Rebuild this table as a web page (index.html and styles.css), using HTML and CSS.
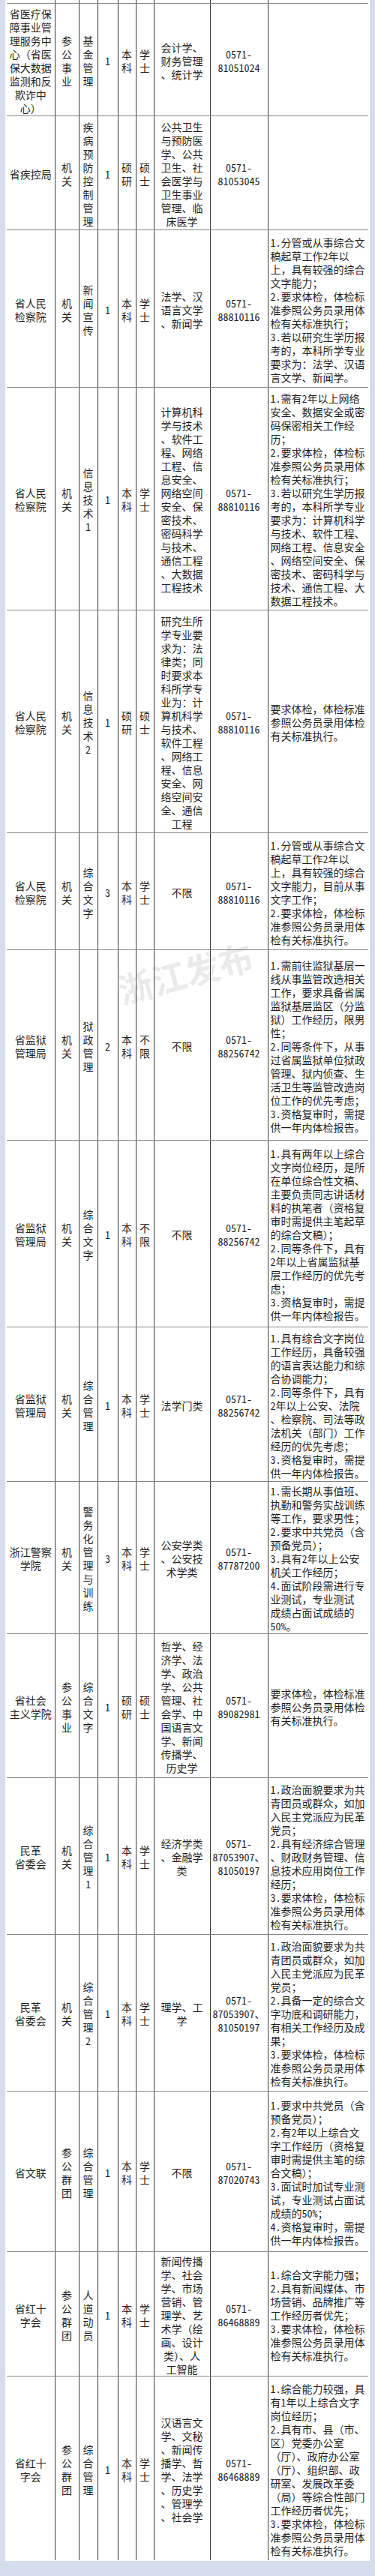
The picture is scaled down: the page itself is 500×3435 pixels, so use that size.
FILE: index.html
```html
<!DOCTYPE html>
<html lang="zh-CN">
<head>
<meta charset="utf-8">
<title>职位表</title>
<link rel="stylesheet" href="styles.css">
</head>
<body>
<div class="page">
<div class="panel">
<table class="jobs">
<colgroup>
<col class="w1"><col class="w2"><col class="w3"><col class="w4"><col class="w5"><col class="w6"><col class="w7"><col class="w8"><col class="w9">
</colgroup>
<tbody>
<tr class="h0"><td></td><td></td><td></td><td></td><td></td><td></td><td></td><td></td><td></td></tr>
<tr class="h150">
<td>省医疗保<br>障事业管<br>理服务中<br>心（省医<br>保大数据<br>监测和反<br>欺诈中<br>心）</td>
<td>参<br>公<br>事<br>业</td>
<td>基<br>金<br>管<br>理</td>
<td>1</td>
<td>本<br>科</td>
<td>学<br>士</td>
<td>会计学、<br>财务管理<br>、统计学</td>
<td>0571-<br>81051024</td>
<td class="note"></td>
</tr>
<tr class="h152">
<td>省疾控局</td>
<td>机<br>关</td>
<td>疾<br>病<br>预<br>防<br>控<br>制<br>管<br>理</td>
<td>1</td>
<td>硕<br>研</td>
<td>硕<br>士</td>
<td>公共卫生<br>与预防医<br>学、公共<br>卫生、社<br>会医学与<br>卫生事业<br>管理、临<br>床医学</td>
<td>0571-<br>81053045</td>
<td class="note"></td>
</tr>
<tr class="h210">
<td>省人民<br>检察院</td>
<td>机<br>关</td>
<td>新<br>闻<br>宣<br>传</td>
<td>1</td>
<td>本<br>科</td>
<td>学<br>士</td>
<td>法学、汉<br>语言文学<br>、新闻学</td>
<td>0571-<br>88810116</td>
<td class="note">1.分管或从事综合文<br>稿起草工作2年以<br>上，具有较强的综合<br>文字能力；<br>2.要求体检，体检标<br>准参照公务员录用体<br>检有关标准执行；<br>3.若以研究生学历报<br>考的，本科所学专业<br>要求为：法学、汉语<br>言文学、新闻学。</td>
</tr>
<tr class="h297">
<td>省人民<br>检察院</td>
<td>机<br>关</td>
<td>信<br>息<br>技<br>术<br>1</td>
<td>1</td>
<td>本<br>科</td>
<td>学<br>士</td>
<td>计算机科<br>学与技术<br>、软件工<br>程、网络<br>工程、信<br>息安全、<br>网络空间<br>安全、保<br>密技术、<br>密码科学<br>与技术、<br>通信工程<br>、大数据<br>工程技术</td>
<td>0571-<br>88810116</td>
<td class="note">1.需有2年以上网络<br>安全、数据安全或密<br>码保密相关工作经<br>历；<br>2.要求体检，体检标<br>准参照公务员录用体<br>检有关标准执行；<br>3.若以研究生学历报<br>考的，本科所学专业<br>要求为：计算机科学<br>与技术、软件工程、<br>网络工程、信息安全<br>、网络空间安全、保<br>密技术、密码科学与<br>技术、通信工程、大<br>数据工程技术。</td>
</tr>
<tr class="h297">
<td>省人民<br>检察院</td>
<td>机<br>关</td>
<td>信<br>息<br>技<br>术<br>2</td>
<td>1</td>
<td>硕<br>研</td>
<td>硕<br>士</td>
<td>研究生所<br>学专业要<br>求为：法<br>律类；同<br>时要求本<br>科所学专<br>业为：计<br>算机科学<br>与技术、<br>软件工程<br>、网络工<br>程、信息<br>安全、网<br>络空间安<br>全、通信<br>工程</td>
<td>0571-<br>88810116</td>
<td class="note">要求体检，体检标准<br>参照公务员录用体检<br>有关标准执行。</td>
</tr>
<tr class="h156">
<td>省人民<br>检察院</td>
<td>机<br>关</td>
<td>综<br>合<br>文<br>字</td>
<td>3</td>
<td>本<br>科</td>
<td>学<br>士</td>
<td>不限</td>
<td>0571-<br>88810116</td>
<td class="note">1.分管或从事综合文<br>稿起草工作2年以<br>上，具有较强的综合<br>文字能力，目前从事<br>文字工作；<br>2.要求体检，体检标<br>准参照公务员录用体<br>检有关标准执行。</td>
</tr>
<tr class="h254">
<td>省监狱<br>管理局</td>
<td>机<br>关</td>
<td>狱<br>政<br>管<br>理</td>
<td>2</td>
<td>本<br>科</td>
<td>不<br>限</td>
<td>不限</td>
<td>0571-<br>88256742</td>
<td class="note">1.需前往监狱基层一<br>线从事监管改造相关<br>工作，要求具备省属<br>监狱基层监区（分监<br>狱）工作经历，限男<br>性；<br>2.同等条件下，从事<br>过省属监狱单位狱政<br>管理、狱内侦查、生<br>活卫生等监管改造岗<br>位工作的优先考虑；<br>3.资格复审时，需提<br>供一年内体检报告。</td>
</tr>
<tr class="h249">
<td>省监狱<br>管理局</td>
<td>机<br>关</td>
<td>综<br>合<br>文<br>字</td>
<td>1</td>
<td>本<br>科</td>
<td>不<br>限</td>
<td>不限</td>
<td>0571-<br>88256742</td>
<td class="note">1.具有两年以上综合<br>文字岗位经历，是所<br>在单位综合性文稿、<br>主要负责同志讲话材<br>料的执笔者（资格复<br>审时需提供主笔起草<br>的综合文稿）；<br>2.同等条件下，具有<br>2年以上省属监狱基<br>层工作经历的优先考<br>虑；<br>3.资格复审时，需提<br>供一年内体检报告。</td>
</tr>
<tr class="h206">
<td>省监狱<br>管理局</td>
<td>机<br>关</td>
<td>综<br>合<br>管<br>理</td>
<td>1</td>
<td>本<br>科</td>
<td>学<br>士</td>
<td>法学门类</td>
<td>0571-<br>88256742</td>
<td class="note">1.具有综合文字岗位<br>工作经历，具备较强<br>的语言表达能力和综<br>合协调能力；<br>2.同等条件下，具有<br>2年以上公安、法院<br>、检察院、司法等政<br>法机关（部门）工作<br>经历的优先考虑；<br>3.资格复审时，需提<br>供一年内体检报告。</td>
</tr>
<tr class="h203">
<td>浙江警察<br>学院</td>
<td>机<br>关</td>
<td>警<br>务<br>化<br>管<br>理<br>与<br>训<br>练</td>
<td>3</td>
<td>本<br>科</td>
<td>学<br>士</td>
<td>公安学类<br>、公安技<br>术学类</td>
<td>0571-<br>87787200</td>
<td class="note">1.需长期从事值班、<br>执勤和警务实战训练<br>等工作，要求男性；<br>2.要求中共党员（含<br>预备党员）；<br>3.具有2年以上公安<br>机关工作经历；<br>4.面试阶段需进行专<br>业测试，专业测试<br>成绩占面试成绩的<br>50%。</td>
</tr>
<tr class="h192">
<td>省社会<br>主义学院</td>
<td>参<br>公<br>事<br>业</td>
<td>综<br>合<br>文<br>字</td>
<td>1</td>
<td>硕<br>研</td>
<td>硕<br>士</td>
<td>哲学、经<br>济学、法<br>学、政治<br>学、公共<br>管理、社<br>会学、中<br>国语言文<br>学、新闻<br>传播学、<br>历史学</td>
<td>0571-<br>89082981</td>
<td class="note">要求体检，体检标准<br>参照公务员录用体检<br>有关标准执行。</td>
</tr>
<tr class="h209">
<td>民革<br>省委会</td>
<td>机<br>关</td>
<td>综<br>合<br>管<br>理<br>1</td>
<td>1</td>
<td>本<br>科</td>
<td>学<br>士</td>
<td>经济学类<br>、金融学<br>类</td>
<td>0571-<br>87053907、<br>81050197</td>
<td class="note">1.政治面貌要求为共<br>青团员或群众，如加<br>入民主党派应为民革<br>党员；<br>2.具有经济综合管理<br>、财政财务管理、信<br>息技术应用岗位工作<br>经历；<br>3.要求体检，体检标<br>准参照公务员录用体<br>检有关标准执行。</td>
</tr>
<tr class="h209">
<td>民革<br>省委会</td>
<td>机<br>关</td>
<td>综<br>合<br>管<br>理<br>2</td>
<td>1</td>
<td>本<br>科</td>
<td>学<br>士</td>
<td>理学、工<br>学</td>
<td>0571-<br>87053907、<br>81050197</td>
<td class="note">1.政治面貌要求为共<br>青团员或群众，如加<br>入民主党派应为民革<br>党员；<br>2.具备一定的综合文<br>字功底和调研能力，<br>有相关工作经历及成<br>果；<br>3.要求体检，体检标<br>准参照公务员录用体<br>检有关标准执行。</td>
</tr>
<tr class="h214">
<td>省文联</td>
<td>参<br>公<br>群<br>团</td>
<td>综<br>合<br>管<br>理</td>
<td>1</td>
<td>本<br>科</td>
<td>学<br>士</td>
<td>不限</td>
<td>0571-<br>87020743</td>
<td class="note">1.要求中共党员（含<br>预备党员）；<br>2.有2年以上综合文<br>字工作经历（资格复<br>审时需提供主笔的综<br>合文稿）；<br>3.面试时加试专业测<br>试，专业测试占面试<br>成绩的50%；<br>4.资格复审时，需提<br>供一年内体检报告。</td>
</tr>
<tr class="h166">
<td>省红十<br>字会</td>
<td>参<br>公<br>群<br>团</td>
<td>人<br>道<br>动<br>员</td>
<td>1</td>
<td>本<br>科</td>
<td>学<br>士</td>
<td>新闻传播<br>学、社会<br>学、市场<br>营销、管<br>理学、艺<br>术学（绘<br>画、设计<br>类）、人<br>工智能</td>
<td>0571-<br>86468889</td>
<td class="note">1.综合文字能力强；<br>2.具有新闻媒体、市<br>场营销、品牌推广等<br>工作经历者优先；<br>3.要求体检，体检标<br>准参照公务员录用体<br>检有关标准执行。</td>
</tr>
<tr class="h246 last">
<td>省红十<br>字会</td>
<td>参<br>公<br>群<br>团</td>
<td>综<br>合<br>管<br>理</td>
<td>1</td>
<td>本<br>科</td>
<td>学<br>士</td>
<td>汉语言文<br>学、文秘<br>、新闻传<br>播学、哲<br>学、法学<br>、历史学<br>、管理学<br>、社会学</td>
<td>0571-<br>86468889</td>
<td class="note">1.综合能力较强，具<br>有1年以上综合文字<br>岗位经历；<br>2.具有市、县（市、<br>区）党委办公室<br>（厅）、政府办公室<br>（厅）、组织部、政<br>研室、发展改革委<br>（局）等综合性部门<br>工作经历者优先；<br>3.要求体检，体检标<br>准参照公务员录用体<br>检有关标准执行。</td>
</tr>
</tbody>
</table>
<div class="watermark">浙江发布</div>
</div>
</div>
</body>
</html>
```

FILE: styles.css
```css
html, body {
  margin: 0;
  padding: 0;
}
body {
  background: #d3ddec;
  font-family: "Noto Sans Mono CJK SC", "Noto Sans CJK SC", "Liberation Sans", sans-serif;
  color: #1f1f1f;
}
.page {
  padding: 0 7px 20px 7px;
}
.panel {
  position: relative;
  background: #ffffff;
  padding: 0 2px 1px 2px;
}
.jobs {
  border-collapse: collapse;
  table-layout: fixed;
  width: 482px;
}
.w1 { width: 64px; }
.w2 { width: 32px; }
.w3 { width: 25px; }
.w4 { width: 27px; }
.w5 { width: 24px; }
.w6 { width: 24px; }
.w7 { width: 75px; }
.w8 { width: 77px; }
.w9 { width: 134px; }
.jobs td {
  font-size: 14px;
  line-height: 18px;
  text-align: center;
  vertical-align: middle;
  white-space: nowrap;
  padding: 3px 0 0 0;
  border-left: 1px solid #3c3c3c;
  border-bottom: 1px solid #858585;
  overflow: visible;
}
.jobs td:first-child {
  border-left: none;
}
.jobs tr.last td {
  border-bottom: none;
}
.jobs td.note {
  text-align: left;
  padding-left: 3px;
}
.h0 { height: 4px; }
.h0 td { padding: 0; }
.h150 { height: 150px; }
.h152 { height: 152px; }
.h156 { height: 156px; }
.h166 { height: 166px; }
.h192 { height: 192px; }
.h203 { height: 203px; }
.h206 { height: 206px; }
.h209 { height: 209px; }
.h210 { height: 210px; }
.h214 { height: 214px; }
.h246 { height: 246px; }
.h249 { height: 249px; }
.h254 { height: 254px; }
.h297 { height: 297px; }
.watermark {
  position: absolute;
  left: 140px;
  top: 1268px;
  width: 200px;
  text-align: center;
  font-family: "Noto Sans CJK SC", sans-serif;
  font-weight: 700;
  font-size: 46px;
  line-height: 56px;
  letter-spacing: 0;
  color: rgba(90, 90, 90, 0.13);
  transform: rotate(-15deg);
  pointer-events: none;
}
```
